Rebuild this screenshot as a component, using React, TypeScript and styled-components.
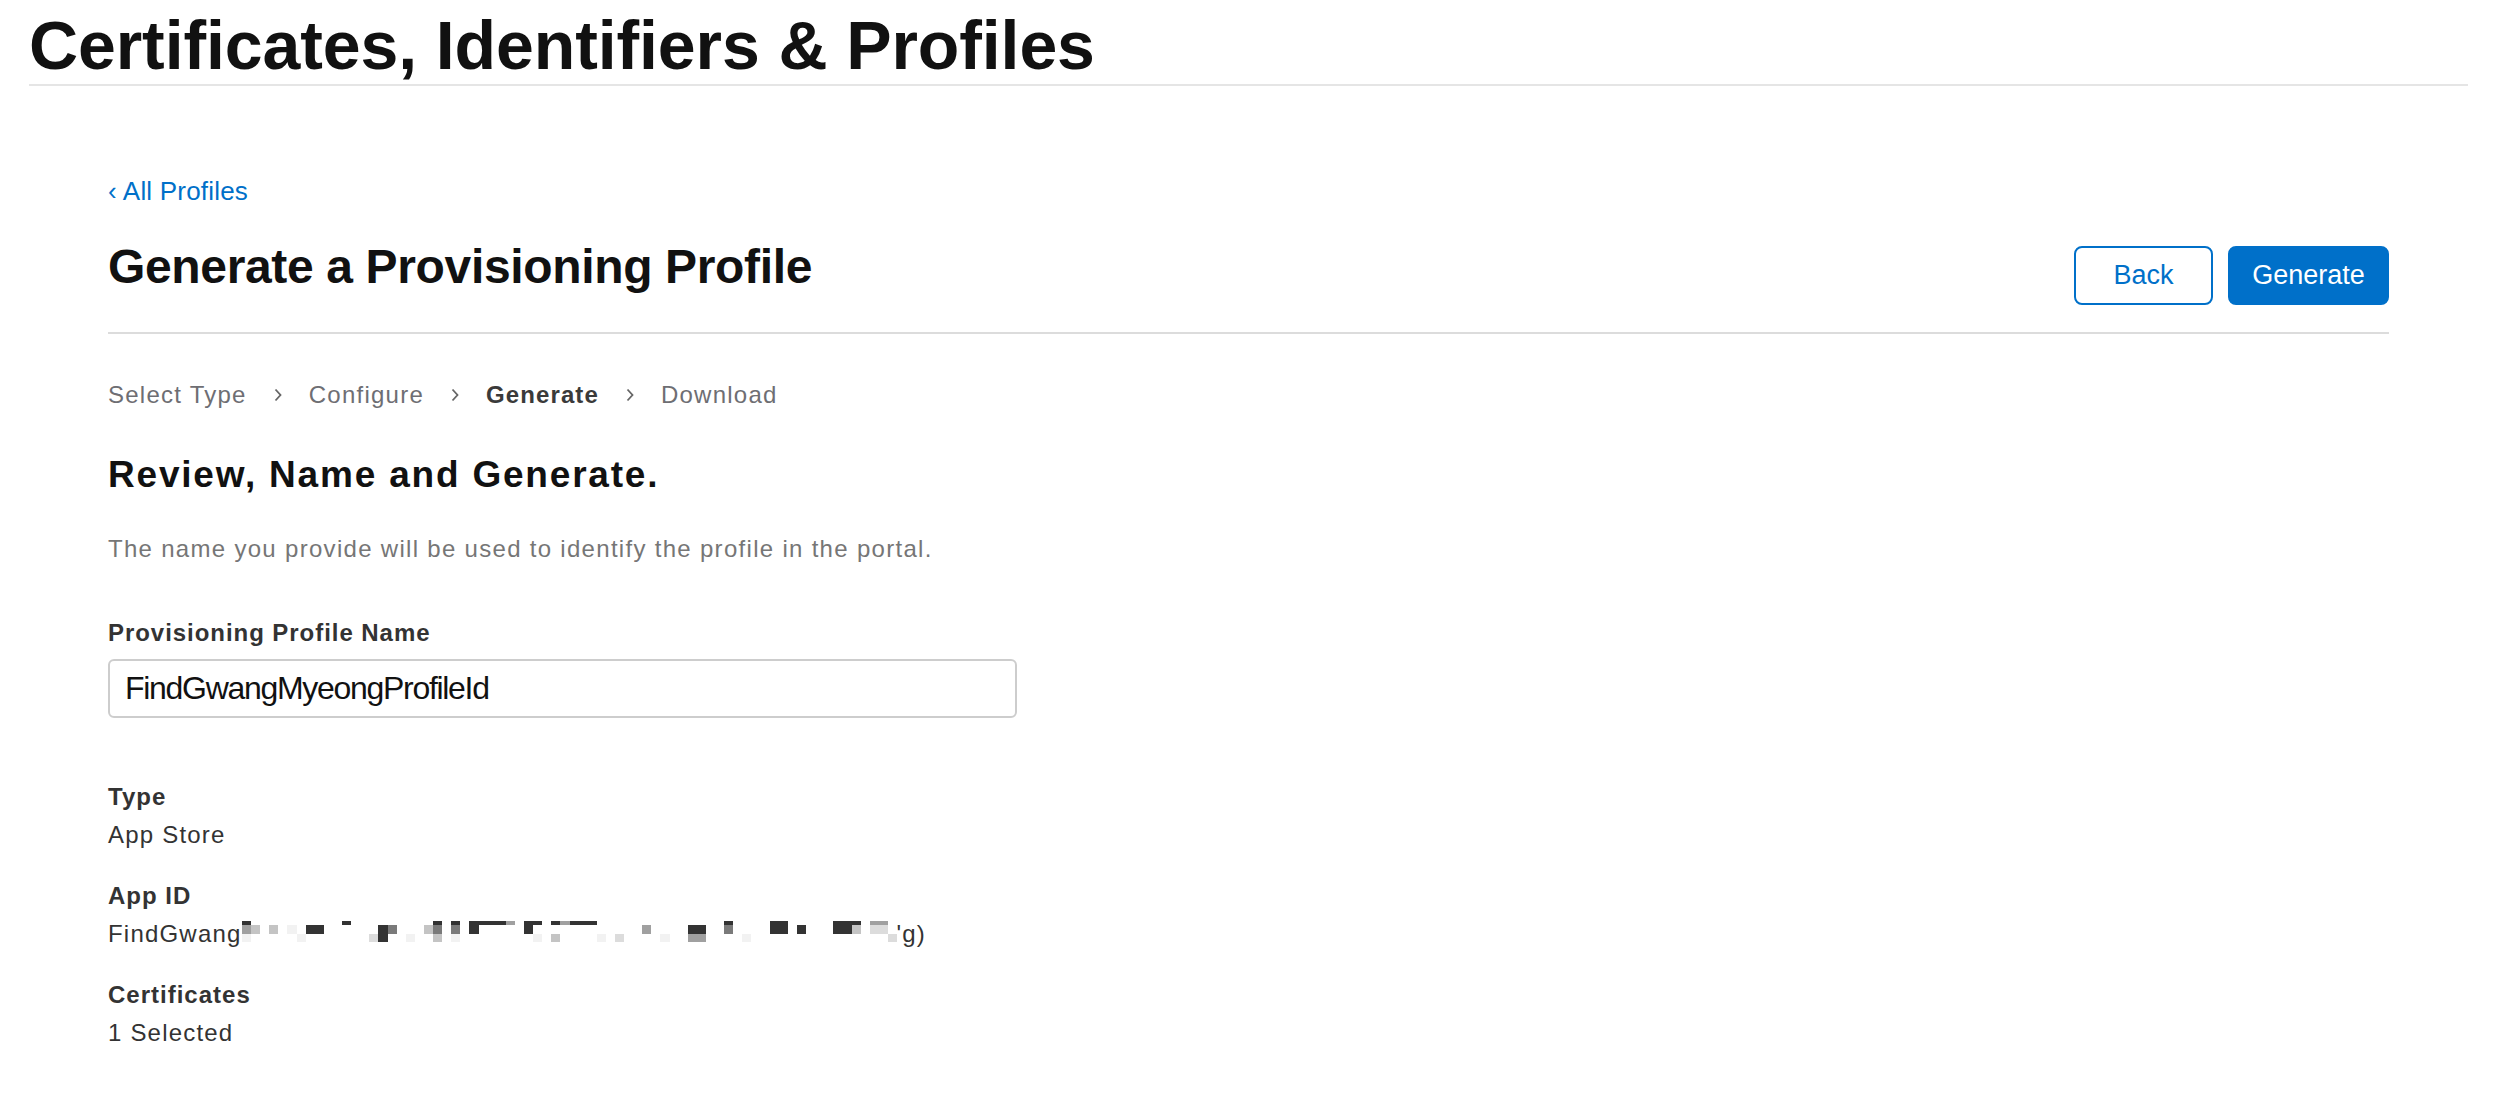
import styled, { createGlobalStyle } from "styled-components";

const colors = {
  black: "#111111",
  text: "#333333",
  grey: "#6e6e73",
  greyLight: "#767676",
  blue: "#0070c9",
  line: "#e5e5e5",
  line2: "#dcdcdc",
  inputBorder: "#cdcdcd",
  white: "#ffffff",
};

const GlobalStyle = createGlobalStyle`
  html, body {
    margin: 0;
    padding: 0;
    background: ${colors.white};
  }
  body {
    font-family: "Liberation Sans", Arial, sans-serif;
    color: ${colors.text};
  }
`;

const Page = styled.div`
  padding: 0 28px 0 29px;
`;

const TopHeader = styled.header`
  border-bottom: 2px solid ${colors.line};
`;

const PageTitle = styled.h1`
  margin: 0;
  padding-top: 7px;
  font-size: 68px;
  line-height: 77px;
  font-weight: 700;
  letter-spacing: -0.1px;
  color: ${colors.black};
`;

const Main = styled.main`
  padding: 0 79px;
`;

const LinkRow = styled.div`
  margin-top: 89px;
  font-size: 26px;
  line-height: 32px;
`;

const BackLink = styled.a`
  color: ${colors.blue};
  text-decoration: none;
  letter-spacing: 0.2px;
`;

const HeaderRow = styled.div`
  display: flex;
  justify-content: space-between;
  align-items: flex-start;
  margin-top: 31px;
  padding-bottom: 27px;
  border-bottom: 2px solid ${colors.line2};
`;

const ProfileTitle = styled.h2`
  margin: 0;
  font-size: 48px;
  line-height: 58px;
  font-weight: 700;
  letter-spacing: -0.35px;
  color: ${colors.black};
`;

const ButtonGroup = styled.div`
  display: flex;
  gap: 15px;
  margin-top: 8px;
`;

const Button = styled.button<{ $primary?: boolean; $width: number }>`
  box-sizing: border-box;
  width: ${(p) => p.$width}px;
  height: 59px;
  border: 2px solid ${colors.blue};
  border-radius: 8px;
  background: ${(p) => (p.$primary ? colors.blue : colors.white)};
  color: ${(p) => (p.$primary ? colors.white : colors.blue)};
  font-family: "Liberation Sans", Arial, sans-serif;
  font-size: 27px;
  padding: 0;
  cursor: pointer;
`;

const Steps = styled.nav`
  display: flex;
  align-items: center;
  gap: 27px;
  margin-top: 46px;
  font-size: 24px;
  line-height: 30px;
`;

const StepItem = styled.span`
  display: flex;
  align-items: center;
  gap: 27px;
`;

const Step = styled.span<{ $current?: boolean }>`
  color: ${(p) => (p.$current ? "#3a3a3a" : colors.grey)};
  font-weight: ${(p) => (p.$current ? 700 : 400)};
  letter-spacing: ${(p) => (p.$current ? "1.1px" : "1.25px")};
`;

const SectionTitle = styled.h3`
  margin: 43px 0 0;
  font-size: 37px;
  line-height: 44px;
  font-weight: 700;
  letter-spacing: 1.8px;
  color: ${colors.black};
`;

const Description = styled.p`
  margin: 37px 0 0;
  font-size: 24px;
  line-height: 30px;
  letter-spacing: 1.3px;
  color: ${colors.greyLight};
`;

const FieldLabel = styled.label`
  display: block;
  margin-top: 54px;
  font-size: 24px;
  line-height: 30px;
  font-weight: 700;
  letter-spacing: 0.95px;
  color: ${colors.text};
`;

const NameInput = styled.input`
  display: block;
  box-sizing: border-box;
  margin-top: 11px;
  width: 909px;
  height: 59px;
  padding: 0 15px;
  border: 2px solid ${colors.inputBorder};
  border-radius: 6px;
  font-family: "Liberation Sans", Arial, sans-serif;
  font-size: 32px;
  letter-spacing: -1.3px;
  color: ${colors.black};
  outline: none;
`;

const Details = styled.dl`
  margin: 60px 0 0;
`;

const DetailGroup = styled.div`
  & + & {
    margin-top: 23px;
  }
`;

const DetailTerm = styled.dt`
  font-size: 24px;
  line-height: 38px;
  font-weight: 700;
  letter-spacing: 1px;
  color: ${colors.text};
`;

const DetailValue = styled.dd`
  margin: 0;
  font-size: 24px;
  line-height: 38px;
  letter-spacing: 1.2px;
  color: ${colors.text};
  white-space: nowrap;
`;

const MosaicSvg = styled.svg`
  vertical-align: baseline;
`;

// pixelated (censored) part of the app id: [row, column, shade]
const SHADES = ["", "#f2f2f2", "#dcdcdc", "#c4c4c4", "#a0a0a0", "#7a7a7a", "#555555", "#333333"];
const ROWS = [
  { y: 0, h: 4 },
  { y: 4, h: 9 },
  { y: 13, h: 8 },
];
const CELL = 9.1;
const COLS = 72;
const MOSAIC: [number, number, number][] = [
  [0, 0, 7], [0, 11, 7], [0, 21, 7], [0, 23, 7], [0, 25, 7], [0, 26, 7], [0, 27, 7], [0, 28, 7],
  [0, 29, 4], [0, 31, 7], [0, 32, 7], [0, 34, 7], [0, 35, 4], [0, 36, 7], [0, 37, 7], [0, 38, 7],
  [0, 53, 7], [0, 58, 7], [0, 59, 7], [0, 65, 7], [0, 66, 7], [0, 67, 7], [0, 69, 4], [0, 70, 4],
  [1, 0, 4], [1, 1, 3], [1, 3, 3], [1, 5, 1], [1, 7, 7], [1, 8, 7], [1, 15, 7], [1, 16, 5],
  [1, 20, 3], [1, 21, 5], [1, 23, 5], [1, 25, 7], [1, 31, 7], [1, 44, 4], [1, 49, 7], [1, 50, 7],
  [1, 53, 5], [1, 58, 7], [1, 59, 7], [1, 61, 7], [1, 65, 7], [1, 66, 7], [1, 67, 3], [1, 69, 2],
  [1, 70, 2],
  [2, 0, 1], [2, 6, 1], [2, 14, 2], [2, 15, 7], [2, 18, 1], [2, 21, 3], [2, 23, 1], [2, 32, 1],
  [2, 34, 3], [2, 39, 1], [2, 41, 2], [2, 46, 1], [2, 49, 4], [2, 50, 4], [2, 55, 1], [2, 71, 2],
];

const Mosaic = () => (
  <MosaicSvg
    width={Math.round(COLS * CELL)}
    height={21}
    viewBox={`0 0 ${COLS * CELL} 21`}
    shapeRendering="crispEdges"
  >
    {MOSAIC.map(([row, col, shade]) => (
      <rect
        key={`${row}-${col}`}
        x={col * CELL}
        y={ROWS[row].y}
        width={CELL}
        height={ROWS[row].h}
        fill={SHADES[shade]}
      />
    ))}
  </MosaicSvg>
);

const Chevron = () => (
  <svg width="8" height="14" viewBox="0 0 8 14">
    <polyline points="1.5,1.5 6.5,7 1.5,12.5" fill="none" stroke="#666" strokeWidth="1.8" />
  </svg>
);

const STEPS = ["Select Type", "Configure", "Generate", "Download"];

const App = () => {
  return (
    <>
      <GlobalStyle />
      <Page>
        <TopHeader>
          <PageTitle>Certificates, Identifiers &amp; Profiles</PageTitle>
        </TopHeader>
        <Main>
          <LinkRow>
            <BackLink href="#">‹ All Profiles</BackLink>
          </LinkRow>
          <HeaderRow>
            <ProfileTitle>Generate a Provisioning Profile</ProfileTitle>
            <ButtonGroup>
              <Button $width={139}>Back</Button>
              <Button $primary $width={161}>
                Generate
              </Button>
            </ButtonGroup>
          </HeaderRow>

          <Steps>
            {STEPS.map((step, i) => (
              <StepItem key={step}>
                {i > 0 && <Chevron />}
                <Step $current={step === "Generate"}>{step}</Step>
              </StepItem>
            ))}
          </Steps>

          <SectionTitle>Review, Name and Generate.</SectionTitle>
          <Description>The name you provide will be used to identify the profile in the portal.</Description>

          <FieldLabel htmlFor="profile-name">Provisioning Profile Name</FieldLabel>
          <NameInput id="profile-name" defaultValue="FindGwangMyeongProfileId" />

          <Details>
            <DetailGroup>
              <DetailTerm>Type</DetailTerm>
              <DetailValue>App Store</DetailValue>
            </DetailGroup>
            <DetailGroup>
              <DetailTerm>App ID</DetailTerm>
              <DetailValue>
                FindGwang
                <Mosaic />
                'g)
              </DetailValue>
            </DetailGroup>
            <DetailGroup>
              <DetailTerm>Certificates</DetailTerm>
              <DetailValue>1 Selected</DetailValue>
            </DetailGroup>
          </Details>
        </Main>
      </Page>
    </>
  );
};

export default App;
